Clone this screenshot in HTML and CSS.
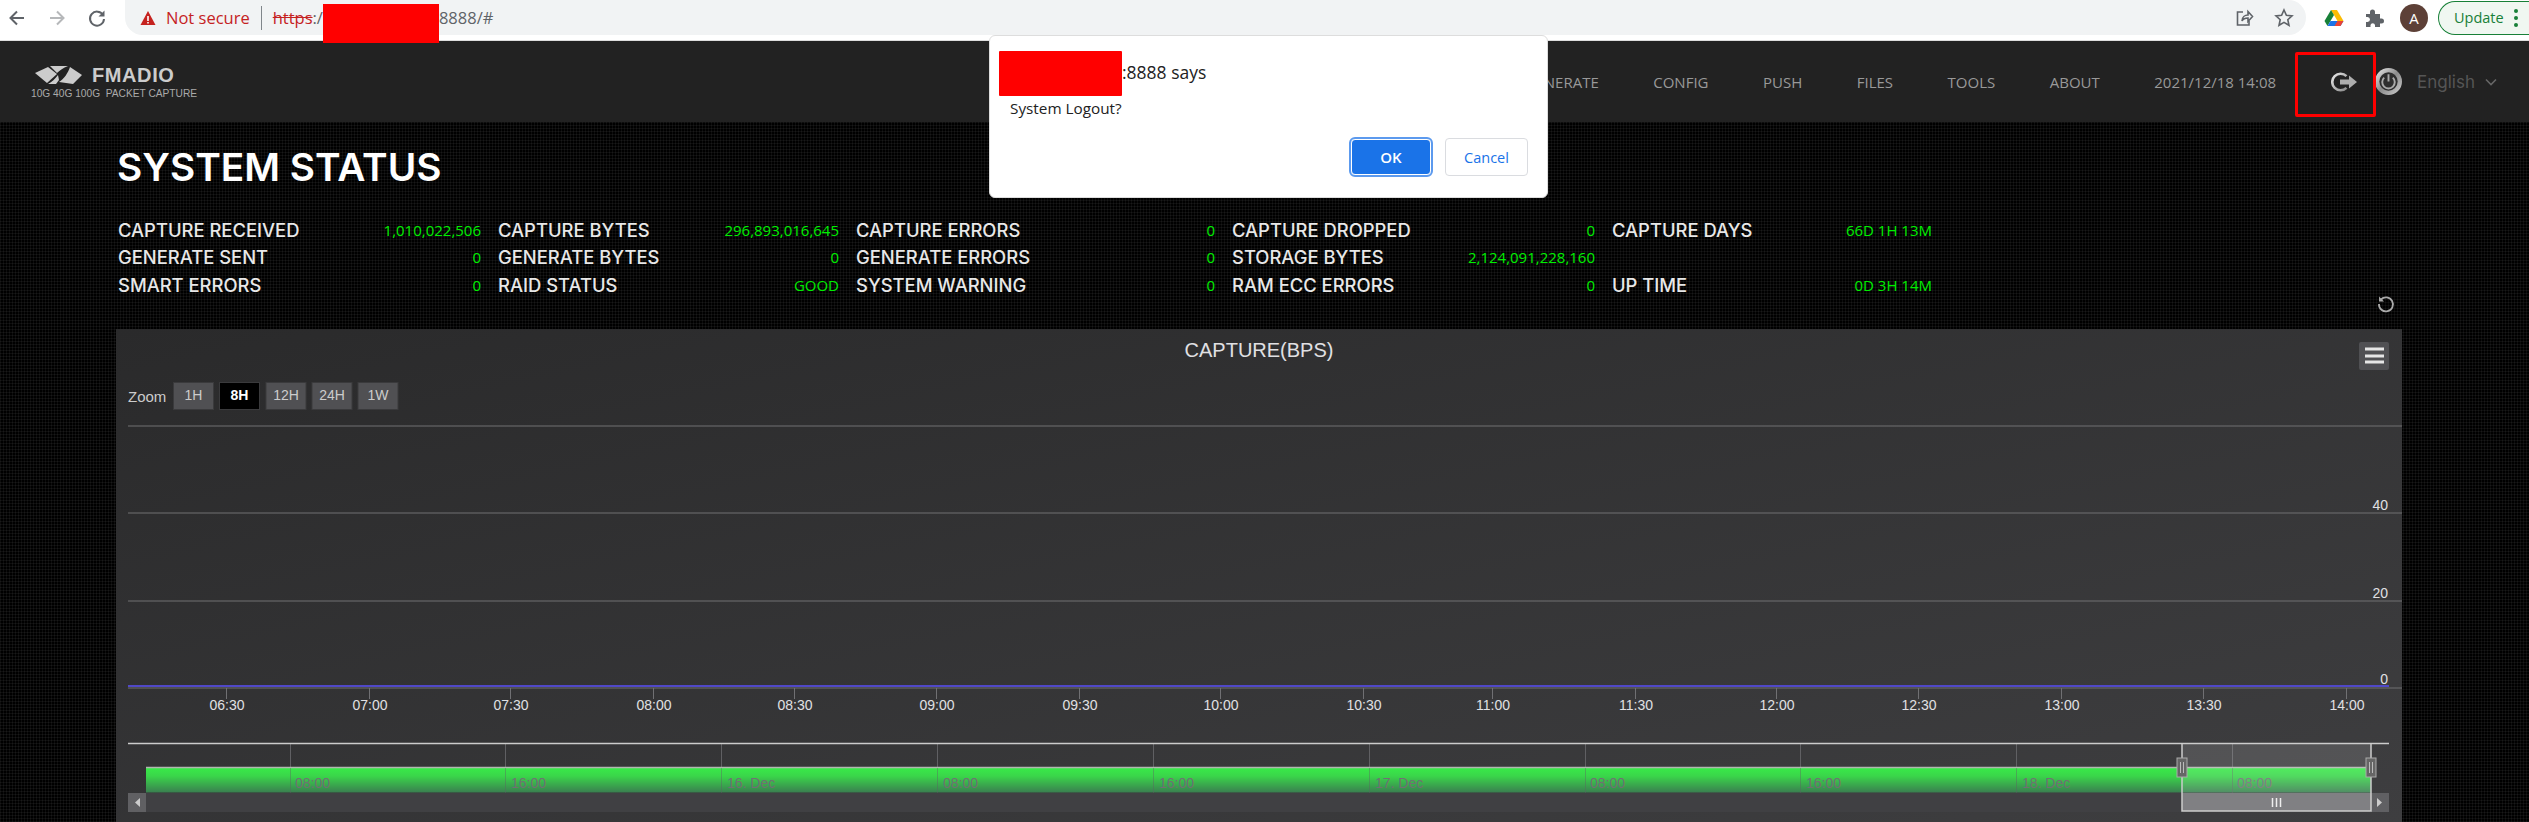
FILE: index.html
```html
<!DOCTYPE html>
<html lang="en">
<head>
    <meta charset="UTF-8">
    <meta name="viewport" content="width=device-width, initial-scale=1.0">
    <title>System Status</title>
    <link rel="stylesheet" href="styles.css">
</head>
<body>
    <!-- browser toolbar -->
    <div class="toolbar">
        <div class="nav-icons">
            <svg class="tool-icon" viewBox="0 0 20 20"><path d="M17 10H4M10 3.5 3.5 10l6.5 6.5" class="tool-stroke"/></svg>
            <svg class="tool-icon faded" viewBox="0 0 20 20"><path d="M3 10h13M10 3.5l6.500 6.500-6.500 6.500" class="tool-stroke"/></svg>
            <svg class="tool-icon" viewBox="0 0 20 20"><path d="M16 7A7 7 0 1 0 17 11" class="tool-stroke"/><path d="M17.500 2.500v6h-6z" class="tool-fill"/></svg>
        </div>
        <div class="address">
            <svg class="warn-icon" viewBox="0 0 16 16"><path d="M8 1 15.500 15H.5z" fill="#c5221f"/><path d="M7.200 6h1.600v5H7.200zM7.200 12h1.600v1.500H7.200z" fill="#fff"/></svg>
            <span class="not-secure">Not secure</span>
            <span class="url"><span class="url-scheme">https</span>:/<span class="url-gap"></span>8888/#</span>
            <span class="address-icons">
                <svg class="tool-icon" viewBox="0 0 20 20"><path d="M9 4H3.500v13H15v-4" class="thin-stroke"/><path d="M8 13c0-4 3-6 6-6V3.500l4.500 5-4.500 5V10c-3 0-5 1-6 3z" class="thin-stroke"/></svg>
                <svg class="tool-icon" viewBox="0 0 20 20"><path d="m10 2 2.400 5.300 5.600.6-4.200 3.800 1.200 5.600-5-2.900-5 2.900 1.200-5.600L2 7.900l5.600-.6z" class="thin-stroke"/></svg>
            </span>
        </div>
        <div class="extensions">
            <svg class="ext-icon" viewBox="0 0 20 18"><path d="M7 1h6l6.500 11h-6z" fill="#fbbc04"/><path d="M7 1 .5 12l3 5L10 6z" fill="#188038"/><path d="M3.500 17h13l3-5h-13z" fill="#1a73e8"/><path d="M13.500 12h6l-3 5h-6z" fill="#ea4335"/></svg>
            <svg class="ext-icon" viewBox="0 0 20 20"><path d="M2 6h4V4a2.500 2.500 0 0 1 5 0v2h5v4.500h1.500a2.500 2.500 0 0 1 0 5H16V19H11v-2a2.300 2.300 0 0 0-4.500 0v2H2v-5h1.500a2.500 2.500 0 0 0 0-5H2z" fill="#5f6368"/></svg>
            <span class="avatar">A</span>
            <span class="update">Update<span class="update-dots"><i></i><i></i><i></i></span></span>
        </div>
    </div>

    <!-- app header -->
    <div class="app-header">
        <div class="logo">
            <div class="logo-top">
                <svg class="logo-mark" viewBox="0 0 47 18"><path d="M0 7 13 1l9 7-10 9z" fill="#ccc"/><path d="M15 0h18c-5 2-8 4-11 7z" fill="#ccc"/><path d="M35 1l12 8-9 9-14-2c5-3 9-9 11-15z" fill="#ccc"/><path d="M13 18c4-2 7-5 10-9l1 5-3 4z" fill="#ccc"/></svg>
                <span class="logo-name">FMADIO</span>
            </div>
            <div class="logo-sub">10G 40G 100G&nbsp; PACKET CAPTURE</div>
        </div>
        <div class="app-nav">
            <span>GENERATE</span>
            <span>CONFIG</span>
            <span>PUSH</span>
            <span>FILES</span>
            <span>TOOLS</span>
            <span>ABOUT</span>
            <span>2021/12/18 14:08</span>
        </div>
        <svg class="logout-icon" viewBox="0 0 26 20">
            <defs><linearGradient id="ring" x1="0" y1="0" x2="1" y2="1"><stop offset="0" stop-color="#e8e8e8"/><stop offset="1" stop-color="#8a8a8a"/></linearGradient></defs>
            <path d="M15.500 4.200A8.300 8.300 0 1 0 15.500 15.800" fill="none" stroke="url(#ring)" stroke-width="2.600"/>
            <path d="M9 7.500h9V3.500l8 6.500-8 6.500v-4H9z" fill="#adadad"/>
        </svg>
        <svg class="power-icon" viewBox="0 0 28 28">
            <defs><linearGradient id="metal" x1="0" y1="0" x2="1" y2="1"><stop offset="0" stop-color="#f0f0f0"/><stop offset=".5" stop-color="#8c8c8c"/><stop offset="1" stop-color="#d0d0d0"/></linearGradient></defs>
            <circle cx="14" cy="14" r="14" fill="url(#metal)"/><circle cx="14" cy="14" r="9.500" fill="#2e2e2e"/>
            <path d="M9.500 10a6.500 6.500 0 1 0 9 0M14 6.500V14" fill="none" stroke="#aaa" stroke-width="2"/>
        </svg>
        <span class="language">English</span>
        <svg class="chevron" viewBox="0 0 12 8"><path d="M1 1.500l5 5 5-5" fill="none" stroke="#666" stroke-width="1.600"/></svg>
    </div>

    <div class="content">
        <h1 class="page-title">SYSTEM STATUS</h1>
        <div class="stats">
            <div class="stat"><span class="stat-label">CAPTURE RECEIVED</span><span class="stat-value">1,010,022,506</span></div>
            <div class="stat"><span class="stat-label">CAPTURE BYTES</span><span class="stat-value">296,893,016,645</span></div>
            <div class="stat"><span class="stat-label">CAPTURE ERRORS</span><span class="stat-value">0</span></div>
            <div class="stat"><span class="stat-label">CAPTURE DROPPED</span><span class="stat-value">0</span></div>
            <div class="stat"><span class="stat-label">CAPTURE DAYS</span><span class="stat-value">66D 1H 13M</span></div>
            <div class="stat"><span class="stat-label">GENERATE SENT</span><span class="stat-value">0</span></div>
            <div class="stat"><span class="stat-label">GENERATE BYTES</span><span class="stat-value">0</span></div>
            <div class="stat"><span class="stat-label">GENERATE ERRORS</span><span class="stat-value">0</span></div>
            <div class="stat"><span class="stat-label">STORAGE BYTES</span><span class="stat-value">2,124,091,228,160</span></div>
            <div class="stat"></div>
            <div class="stat"><span class="stat-label">SMART ERRORS</span><span class="stat-value">0</span></div>
            <div class="stat"><span class="stat-label">RAID STATUS</span><span class="stat-value">GOOD</span></div>
            <div class="stat"><span class="stat-label">SYSTEM WARNING</span><span class="stat-value">0</span></div>
            <div class="stat"><span class="stat-label">RAM ECC ERRORS</span><span class="stat-value">0</span></div>
            <div class="stat"><span class="stat-label">UP TIME</span><span class="stat-value">0D 3H 14M</span></div>
        </div>
        <div class="refresh-row">
            <svg class="refresh-icon" viewBox="0 0 18 18"><path d="M4 4.500A7 7 0 1 1 2 9" fill="none" stroke="#aaa" stroke-width="1.800"/><path d="M2 1.500v5h5z" fill="#aaa"/></svg>
        </div>

        <!-- chart, drawn like a charting library would: coordinates are page pixels -->
        <svg class="chart" viewBox="116 329 2286 493">
            <defs>
                <linearGradient id="chartbg" x1="0" y1="0" x2="1" y2="1"><stop offset="0" stop-color="#2a2a2b"/><stop offset="1" stop-color="#3e3e40"/></linearGradient>
                <linearGradient id="navfill" x1="0" y1="0" x2="0" y2="1"><stop offset="0" stop-color="#38ec48"/><stop offset=".35" stop-color="#3ad64a"/><stop offset="1" stop-color="#3a7f50"/></linearGradient>
            </defs>
            <rect x="116" y="329" width="2286" height="493" fill="url(#chartbg)"/>
            <text x="1259" y="357" class="chart-title" text-anchor="middle">CAPTURE(BPS)</text>

            <rect x="2359" y="342" width="30" height="28" rx="2" fill="#505053"/>
            <path d="M2365 349h19M2365 356h19M2365 362h19" stroke="#e6e6e6" stroke-width="3"/>

            <text x="128" y="402" class="zoom-label">Zoom</text>
            <rect x="173.500" y="382.500" width="40" height="27" class="range-btn"/><text x="193.500" y="400" class="range-text" text-anchor="middle">1H</text>
            <rect x="219.500" y="382.500" width="40" height="27" class="range-btn active"/><text x="239.500" y="400" class="range-text active" text-anchor="middle">8H</text>
            <rect x="266" y="382.500" width="40" height="27" class="range-btn"/><text x="286" y="400" class="range-text" text-anchor="middle">12H</text>
            <rect x="312" y="382.500" width="40" height="27" class="range-btn"/><text x="332" y="400" class="range-text" text-anchor="middle">24H</text>
            <rect x="358" y="382.500" width="40" height="27" class="range-btn"/><text x="378" y="400" class="range-text" text-anchor="middle">1W</text>

            <path d="M128 426h2274M128 513h2274M128 601h2274M128 688h2274" class="grid-line"/>
            <text x="2388" y="510" class="axis-label" text-anchor="end">40</text>
            <text x="2388" y="598" class="axis-label" text-anchor="end">20</text>
            <text x="2388" y="684" class="axis-label" text-anchor="end">0</text>
            <path d="M128 686h2261" class="series-line"/>

            <path d="M226.500 688v11M369.500 688v11M510.500 688v11M653.500 688v11M794.500 688v11M936.500 688v11M1079.500 688v11M1220.500 688v11M1363.500 688v11M1492.500 688v11M1635.500 688v11M1776.500 688v11M1918.500 688v11M2061.500 688v11M2203.500 688v11M2346.500 688v11" class="grid-line"/>
            <g class="axis-label" text-anchor="middle">
                <text x="227" y="710">06:30</text><text x="370" y="710">07:00</text><text x="511" y="710">07:30</text><text x="654" y="710">08:00</text>
                <text x="795" y="710">08:30</text><text x="937" y="710">09:00</text><text x="1080" y="710">09:30</text><text x="1221" y="710">10:00</text>
                <text x="1364" y="710">10:30</text><text x="1493" y="710">11:00</text><text x="1636" y="710">11:30</text><text x="1777" y="710">12:00</text>
                <text x="1919" y="710">12:30</text><text x="2062" y="710">13:00</text><text x="2204" y="710">13:30</text><text x="2347" y="710">14:00</text>
            </g>

            <!-- navigator -->
            <path d="M290.500 744v23M505.500 744v23M721.500 744v23M937.500 744v23M1153.500 744v23M1369.500 744v23M1585.500 744v23M1800.500 744v23M2016.500 744v23M2232.500 744v23" class="nav-tick"/>
            <rect x="146" y="767" width="2225" height="25.500" fill="url(#navfill)"/>
            <path d="M146 767.500h2225" stroke="#b0b8b0" stroke-width="1.500"/>
            <path d="M290.500 768v25M505.500 768v25M721.500 768v25M937.500 768v25M1153.500 768v25M1369.500 768v25M1585.500 768v25M1800.500 768v25M2016.500 768v25M2232.500 768v25" class="nav-tick faint"/>
            <g class="nav-label">
                <text x="295" y="788">08:00</text><text x="511" y="788">16:00</text><text x="727" y="788">16. Dec</text><text x="943" y="788">08:00</text><text x="1159" y="788">16:00</text>
                <text x="1375" y="788">17. Dec</text><text x="1590" y="788">08:00</text><text x="1806" y="788">16:00</text><text x="2022" y="788">18. Dec</text><text x="2237" y="788">08:00</text>
            </g>
            <rect x="128" y="793" width="2261" height="19" fill="#404043"/>
            <rect x="128" y="793" width="18" height="19" fill="#606063"/>
            <rect x="2371" y="793" width="18" height="19" fill="#606063"/>
            <path d="M140 798v9l-5-4.500z" fill="#ccc"/>
            <path d="M2377 798v9l5-4.500z" fill="#ccc"/>
            <rect x="2182" y="744" width="189" height="49" fill="#fff" fill-opacity=".12"/>
            <rect x="2182" y="793" width="189" height="18" fill="#808083"/>
            <path d="M128 743.500h2054M2371 743.500h18" stroke="#ccc" stroke-width="1.500"/>
            <path d="M2182 743.500h189M2182 744v67h189v-67" fill="none" stroke="#ccc" stroke-width="1.500"/>
            <path d="M2272.500 798v9M2276.500 798v9M2280.500 798v9" stroke="#eee" stroke-width="1.500"/>
            <rect x="2177" y="758" width="10" height="19" class="nav-handle"/>
            <rect x="2366" y="758" width="10" height="19" class="nav-handle"/>
            <path d="M2180.500 762v11M2183.500 762v11M2369.500 762v11M2372.500 762v11" stroke="#bbb"/>
        </svg>
    </div>

    <!-- things lying over the page -->
    <div class="redact redact-url"></div>
    <div class="logout-mark"></div>

    <div class="dialog">
        <div class="dialog-title"><span class="redact-host"></span><span class="dialog-origin">:8888 says</span></div>
        <div class="dialog-msg">System Logout?</div>
        <div class="dialog-buttons">
            <button class="btn btn-ok">OK</button>
            <button class="btn btn-cancel">Cancel</button>
        </div>
    </div>
</body>
</html>
```
FILE: styles.css
```css
html, body {
    margin: 0;
    height: 822px;
    overflow: hidden;
}
body {
    background-color: #000;
    background-image:
        repeating-linear-gradient(0deg, rgba(255, 255, 255, 0.05) 0 1px, transparent 1px 3px),
        repeating-linear-gradient(90deg, rgba(255, 255, 255, 0.05) 0 1px, transparent 1px 3px);
    font-family: "Open Sans", sans-serif;
}

/* browser toolbar */
.toolbar {
    display: flex;
    height: 40px;
    background-color: #fff;
    border-bottom: 1px solid #ddd;
}
.nav-icons {
    display: flex;
    align-items: center;
    gap: 20px;
    width: 125px;
    height: 35px;
    padding-left: 7px;
    box-sizing: border-box;
}
.tool-icon {
    width: 20px;
    height: 20px;
}
.tool-icon.faded {
    opacity: 0.45;
}
.tool-stroke {
    fill: none;
    stroke: #5f6368;
    stroke-width: 2;
}
.tool-fill {
    fill: #5f6368;
}
.thin-stroke {
    fill: none;
    stroke: #5f6368;
    stroke-width: 1.6;
}
.address {
    display: flex;
    align-items: center;
    width: 2181px;
    height: 35px;
    padding-left: 15px;
    box-sizing: border-box;
    background-color: #f1f3f4;
    border-radius: 0 18px 18px 0 / 0 18px 18px 0;
    border-bottom-left-radius: 18px;
}
.warn-icon {
    width: 16px;
    height: 16px;
}
.not-secure {
    margin-left: 10px;
    padding-right: 11px;
    border-right: 1px solid #80868b;
    font-size: 16.500px;
    line-height: 24px;
    color: #c5221f;
}
.url {
    margin-left: 11px;
    font-size: 16.500px;
    color: #5f6368;
}
.url-scheme {
    color: #c5221f;
    text-decoration: line-through;
}
.url-gap {
    display: inline-block;
    width: 116px;
}
.address-icons {
    display: flex;
    gap: 20px;
    margin-left: auto;
    padding-right: 12px;
}
.extensions {
    display: flex;
    align-items: center;
    height: 35px;
    flex: 1;
    padding-left: 18px;
    gap: 20px;
}
.ext-icon {
    width: 20px;
    height: 20px;
}
.avatar {
    width: 28px;
    height: 28px;
    margin-left: -4px;
    border-radius: 50%;
    background-color: #5d4037;
    color: #fff;
    font-size: 15px;
    line-height: 28px;
    text-align: center;
}
.update {
    display: flex;
    align-items: center;
    height: 34px;
    margin-left: -10px;
    margin-right: -20px;
    padding: 0 5px 0 15px;
    flex: 1;
    border: 1px solid #188038;
    border-right: none;
    border-radius: 17px 0 0 17px;
    box-sizing: border-box;
    background-color: #f0f7f1;
    color: #188038;
    font-size: 14.500px;
}
.update-dots {
    display: flex;
    flex-direction: column;
    gap: 3px;
    margin-left: 10px;
}
.update-dots i {
    width: 4px;
    height: 4px;
    border-radius: 50%;
    background-color: #188038;
}

/* app header */
.app-header {
    display: flex;
    align-items: center;
    height: 81px;
    padding-left: 31px;
    background-color: #222;
}
.logo-top {
    display: flex;
    align-items: center;
    gap: 10px;
    padding-left: 4px;
}
.logo-mark {
    width: 47px;
    height: 18px;
}
.logo-name {
    font-family: "Liberation Sans", sans-serif;
    font-weight: bold;
    font-size: 20px;
    letter-spacing: 0.6px;
    line-height: 22px;
    color: #ccc;
}
.logo-sub {
    margin-top: 2px;
    font-family: "Liberation Sans", sans-serif;
    font-size: 10.200px;
    color: #aaa;
    white-space: nowrap;
}
.app-nav {
    display: flex;
    gap: 54.500px;
    margin-left: auto;
    font-size: 15px;
    color: #999;
}
.logout-icon {
    width: 26px;
    height: 20px;
    margin-left: 55px;
}
.power-icon {
    width: 27px;
    height: 27px;
    margin-left: 18px;
}
.language {
    margin-left: 15px;
    font-family: "Inter", sans-serif;
    font-size: 17px;
    color: #555;
}
.chevron {
    width: 12px;
    height: 8px;
    margin-left: 10px;
    margin-right: 32px;
}

/* status page */
.content {
    width: 2286px;
    margin-left: 116px;
}
.page-title {
    margin: 0;
    padding: 22px 0 0 1px;
    font-family: "Inter", sans-serif;
    font-size: 38.800px;
    font-weight: 600;
    line-height: 46px;
    color: #fff;
}
.stats {
    display: grid;
    grid-template-columns: 363px 341px 359px 363px 320px;
    column-gap: 17px;
    grid-auto-rows: 27.500px;
    margin-top: 26px;
    padding-left: 2px;
    align-items: center;
}
.stat {
    display: flex;
    justify-content: space-between;
    align-items: center;
}
.stat-label {
    font-family: "Inter", sans-serif;
    font-size: 18.400px;
    font-weight: 500;
    color: #e8e8e8;
    white-space: nowrap;
}
.stat-value {
    font-size: 15px;
    color: #00ee00;
    white-space: nowrap;
}
.refresh-row {
    display: flex;
    justify-content: flex-end;
    align-items: flex-start;
    height: 30px;
    padding-right: 7px;
}
.refresh-icon {
    width: 18px;
    height: 18px;
    margin-top: -4px;
}

/* chart */
.chart {
    display: block;
    width: 2286px;
    height: 493px;
    font-family: "Liberation Sans", sans-serif;
}
.chart-title {
    font-size: 20px;
    fill: #e0e0e3;
}
.axis-label {
    font-size: 14px;
    fill: #e0e0e3;
}
.zoom-label {
    font-size: 15px;
    fill: #ccc;
}
.range-btn {
    fill: #505053;
    stroke: #3a3a3c;
}
.range-btn.active {
    fill: #000;
}
.range-text {
    font-size: 14px;
    fill: #ccc;
}
.range-text.active {
    fill: #fff;
    font-weight: bold;
}
.grid-line {
    fill: none;
    stroke: #707073;
    stroke-width: 1;
}
.series-line {
    stroke: #5048c8;
    stroke-width: 2;
}
.nav-tick {
    stroke: #606063;
}
.nav-tick.faint {
    stroke-opacity: 0.4;
}
.nav-label {
    font-size: 14px;
    fill: #707073;
}
.nav-handle {
    fill: #666;
    stroke: #aaa;
}

/* overlays */
.redact {
    position: absolute;
    background-color: #f00;
}
.redact-url {
    left: 323px;
    top: 4px;
    width: 116px;
    height: 39px;
}
.logout-mark {
    position: absolute;
    left: 2295px;
    top: 52px;
    width: 81px;
    height: 65px;
    box-sizing: border-box;
    border: 3px solid #f00;
    border-radius: 2px;
}
.dialog {
    position: absolute;
    left: 989px;
    top: 35px;
    width: 559px;
    height: 163px;
    padding: 15px 19px 19px 9px;
    box-sizing: border-box;
    background-color: #fff;
    border: 1px solid #ddd;
    border-radius: 6px;
    color: #222;
}
.dialog-title {
    display: flex;
    align-items: center;
    font-size: 17.500px;
}
.dialog-origin {
    padding-bottom: 4px;
}
.redact-host {
    width: 123px;
    height: 45px;
    background-color: #f00;
    border-radius: 1px;
}
.dialog-msg {
    margin-top: 2px;
    padding-left: 11px;
    font-size: 15.300px;
}
.dialog-buttons {
    display: flex;
    justify-content: flex-end;
    align-items: center;
    gap: 14px;
    margin-top: 20px;
}
.btn {
    font-family: "Open Sans", sans-serif;
    font-size: 14.500px;
    border-radius: 4px;
    box-sizing: border-box;
}
.btn-ok {
    width: 80px;
    height: 36px;
    background-color: #1a73e8;
    border: 1px solid #fff;
    outline: 2px solid #5c9aee;
    color: #fff;
    font-size: 15px;
    font-weight: 600;
}
.btn-cancel {
    width: 83px;
    height: 38px;
    background-color: #fff;
    border: 1px solid #dadce0;
    color: #1a73e8;
}
```
